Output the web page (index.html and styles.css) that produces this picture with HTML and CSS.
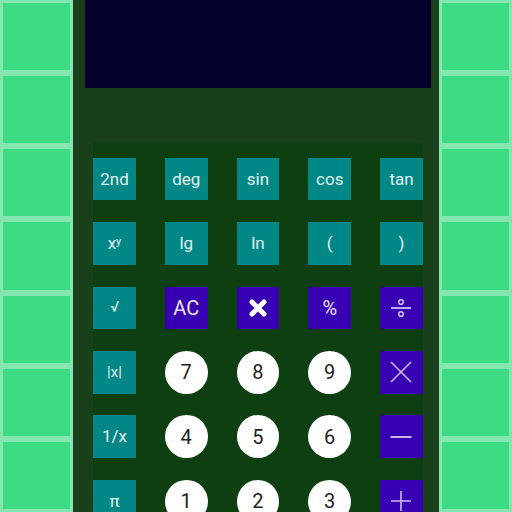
FILE: index.html
```html
<!DOCTYPE html>
<html>
<head>
<meta charset="utf-8">
<link rel="stylesheet" href="styles.css">
</head>
<body>
<div class="page">
  <div class="tiles">
    <div class="tile"></div><div class="tile"></div><div class="tile"></div><div class="tile"></div><div class="tile"></div><div class="tile"></div><div class="tile"></div>
  </div>
  <div class="panel">
    <div class="screen"></div>
    <div class="keypad">
      <div class="key fn">2nd</div>
      <div class="key fn">deg</div>
      <div class="key fn">sin</div>
      <div class="key fn">cos</div>
      <div class="key fn">tan</div>

      <div class="key fn">x<sup>y</sup></div>
      <div class="key fn">lg</div>
      <div class="key fn">ln</div>
      <div class="key fn">(</div>
      <div class="key fn">)</div>

      <div class="key fn small">√</div>
      <div class="key op big">AC</div>
      <div class="key op"><svg width="20" height="20" viewBox="0 0 20 20"><path d="M4 4L16 16M16 4L4 16" stroke="#ffffff" stroke-width="5" stroke-linecap="round"/></svg></div>
      <div class="key op big">%</div>
      <div class="key op"><svg width="22" height="22" viewBox="0 0 22 22"><path d="M1 11H21" stroke="#cdbdf4" stroke-width="1.8"/><circle cx="11" cy="5" r="2.3" fill="none" stroke="#cdbdf4" stroke-width="1.6"/><circle cx="11" cy="17" r="2.3" fill="none" stroke="#cdbdf4" stroke-width="1.6"/></svg></div>

      <div class="key fn small">|x|</div>
      <div class="key num">7</div>
      <div class="key num">8</div>
      <div class="key num">9</div>
      <div class="key op"><svg width="22" height="22" viewBox="0 0 22 22"><path d="M1 1L21 21M21 1L1 21" stroke="#cbb9f3" stroke-width="1.6"/></svg></div>

      <div class="key fn">1/x</div>
      <div class="key num">4</div>
      <div class="key num">5</div>
      <div class="key num">6</div>
      <div class="key op"><svg width="22" height="22" viewBox="0 0 22 22"><path d="M0.5 11H21.5" stroke="#cbb9f3" stroke-width="2"/></svg></div>

      <div class="key fn">π</div>
      <div class="key num">1</div>
      <div class="key num">2</div>
      <div class="key num">3</div>
      <div class="key op"><svg width="22" height="22" viewBox="0 0 22 22"><path d="M1 11H21M11 1V21" stroke="#cbb9f3" stroke-width="1.6"/></svg></div>
    </div>
  </div>
  <div class="tiles">
    <div class="tile"></div><div class="tile"></div><div class="tile"></div><div class="tile"></div><div class="tile"></div><div class="tile"></div><div class="tile"></div>
  </div>
</div>
</body>
</html>
```

FILE: styles.css
```css
html, body {
  margin: 0;
  padding: 0;
  width: 512px;
  height: 512px;
  overflow: hidden;
  font-family: Roboto, "Liberation Sans", sans-serif;
}

.page {
  width: 512px;
  height: 512px;
  display: grid;
  grid-template-columns: 1fr 5fr 1fr;
  overflow: hidden;
}

.tiles {
  display: grid;
  grid-template-rows: repeat(7, 1fr);
  height: 512px;
}

.tile {
  box-sizing: border-box;
  background: #3ddc84;
  border: 3px solid #84e7b0;
}

.panel {
  background: #1a3f1b;
  padding: 0 8px 0 12px;
  display: flex;
  flex-direction: column;
  height: 512px;
  overflow: hidden;
}

.screen {
  height: 88px;
  flex: none;
  background: #03002b;
}

.keypad {
  margin: 55px 8px 0 8px;
  padding-top: 14.7px;
  background: #0e3f11;
  display: grid;
  grid-template-columns: repeat(5, 42.7px);
  grid-auto-rows: 42.7px;
  justify-content: space-between;
  row-gap: 21.75px;
  flex: 1;
}

.key {
  display: flex;
  align-items: center;
  justify-content: center;
  font-size: 17px;
  line-height: 1;
}

.fn {
  background: #018786;
  color: #e2f2f1;
}

.fn.small {
  font-size: 15px;
}

.fn sup {
  font-size: 11px;
  position: relative;
  top: -2px;
  vertical-align: top;
}

.op {
  background: #3700b3;
  color: #ece4fb;
}

.op.big {
  font-size: 20px;
}

.num {
  background: #ffffff;
  border-radius: 50%;
  color: #222222;
  font-size: 20px;
}
```
